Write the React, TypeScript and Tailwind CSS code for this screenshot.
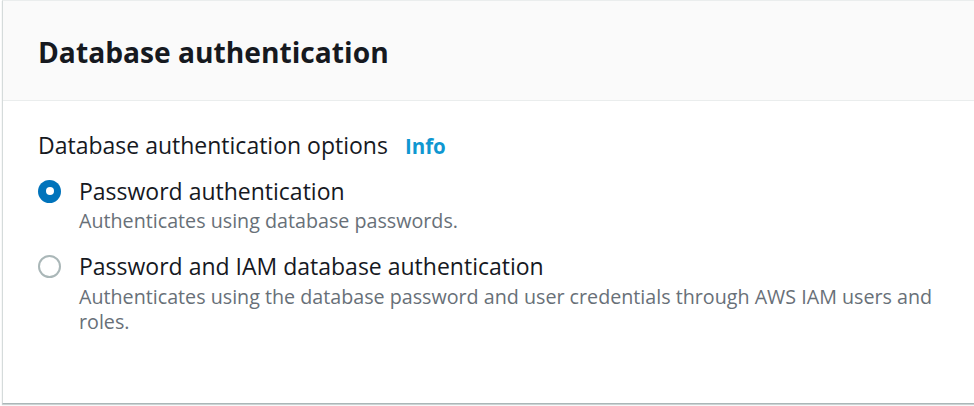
export default function App() {
  return (
    <div className="w-[974px] h-[406px] bg-white overflow-hidden pl-[2px]" style={{ fontFamily: '"Open Sans", "Noto Sans", sans-serif' }}>
      <div className="h-[404px] border-l border-t border-b border-l-[#d5dbdb] border-t-[#eaeded] border-b-[#aab7b8] shadow-[0_1px_1px_0_rgba(0,28,36,0.2)] bg-white flex flex-col">
        <div className="h-[100px] bg-[#fafafa] border-b border-[#eaeded] pl-[35px] pt-[31px]">
          <h2 className="text-[28.2px] leading-[40px] font-bold text-[#16191f]">Database authentication</h2>
        </div>
        <div className="pl-[35px] pt-[29px]">
          <div className="flex items-baseline gap-[17px]">
            <span className="text-[23px] leading-[30px] text-[#16191f]">Database authentication options</span>
            <span className="text-[20.5px] leading-[30px] font-bold text-[#0f97d1]">Info</span>
          </div>
          <div className="mt-[15px] flex flex-col gap-[18px]">
            <div className="flex gap-[18px]">
              <div className="h-[30px] flex items-center">
                <span className="w-[23px] h-[23px] rounded-full bg-[#0073bb] flex items-center justify-center">
                  <span className="w-[8px] h-[8px] rounded-full bg-white" />
                </span>
              </div>
              <div>
                <div className="text-[23px] leading-[30px] text-[#16191f]">Password authentication</div>
                <div className="text-[19.7px] leading-[24px] mt-[3px] text-[#687078]">Authenticates using database passwords.</div>
              </div>
            </div>
            <div className="flex gap-[18px]">
              <div className="h-[30px] flex items-center">
                <span className="w-[23px] h-[23px] rounded-full border-2 border-[#aab7b8] bg-white" />
              </div>
              <div className="w-[870px]">
                <div className="text-[23px] leading-[30px] text-[#16191f]">Password and IAM database authentication</div>
                <div className="text-[19.7px] leading-[25px] mt-[3px] text-[#687078]">Authenticates using the database password and user credentials through AWS IAM users and roles.</div>
              </div>
            </div>
          </div>
        </div>
      </div>
    </div>
  );
}
